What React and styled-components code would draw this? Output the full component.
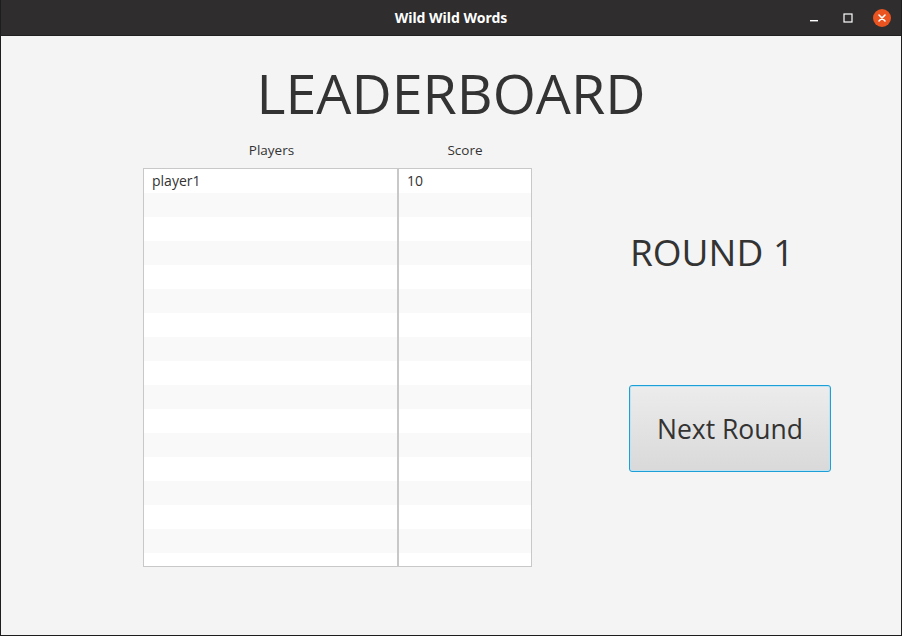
import React from "react";
import styled, { createGlobalStyle } from "styled-components";

const Global = createGlobalStyle`
  html, body { margin: 0; padding: 0; background: #f4f4f4; }
  * { box-sizing: border-box; }
`;

const Window = styled.div`
  width: 902px;
  height: 636px;
  display: flex;
  flex-direction: column;
  background: #f4f4f4;
  border-left: 1px solid #1d1d1d;
  border-right: 1px solid #1d1d1d;
  border-bottom: 1px solid #1d1d1d;
  overflow: hidden;
`;

const TitleBar = styled.div`
  height: 36px;
  flex: none;
  background: #2f2d2d;
  display: flex;
  align-items: center;
  justify-content: center;
  position: relative;
  color: #ffffff;
  font-family: "Noto Sans", "DejaVu Sans", sans-serif;
  font-weight: 700;
  font-size: 14px;
  border-bottom: 1px solid #202020;
`;

const Controls = styled.div`
  position: absolute;
  right: 10px;
  top: 0;
  height: 36px;
  display: flex;
  align-items: center;
  gap: 16px;
`;

const CtrlBtn = styled.div`
  width: 18px;
  height: 18px;
  display: flex;
  align-items: center;
  justify-content: center;
  border-radius: 50%;
  background: ${(p) => (p.$close ? "#e95420" : "transparent")};
`;

const Content = styled.div`
  flex: 1;
  display: flex;
  flex-direction: column;
  align-items: center;
  font-family: "Open Sans", "Noto Sans", sans-serif;
  color: #333333;
`;

const Heading = styled.h1`
  margin: 29px 0 0 0;
  font-weight: 400;
  font-size: 55.5px;
  line-height: 56px;
  letter-spacing: 0;
`;

const Main = styled.div`
  display: flex;
  align-self: stretch;
  padding-left: 142px;
  margin-top: 19px;
`;

const TableArea = styled.div`
  display: flex;
  flex-direction: column;
`;

const HeaderRow = styled.div`
  display: grid;
  grid-template-columns: 255px 132px;
  padding: 0 1px;
  height: 20px;
  align-items: center;
  font-size: 13.5px;
`;

const HeaderCell = styled.div`
  text-align: center;
`;

const Table = styled.div`
  margin-top: 8px;
  width: 389px;
  height: 399px;
  border: 1px solid #c8c8c8;
  background: #ffffff;
  overflow: hidden;
`;

const Row = styled.div`
  display: grid;
  grid-template-columns: 255px 132px;
  height: 24px;
  background: ${(p) => (p.$odd ? "#f9f9f9" : "#ffffff")};
`;

const Cell = styled.div`
  font-size: 14px;
  padding-left: 8px;
  line-height: 24px;
  ${(p) => (p.$first ? "border-right: 2px solid #c8c8c8;" : "")}
`;

const Side = styled.div`
  display: flex;
  flex-direction: column;
  align-items: flex-start;
  margin-left: 97px;
`;

const Round = styled.div`
  margin-top: 92px;
  margin-left: 1px;
  font-size: 37px;
  line-height: 40px;
`;

const NextButton = styled.button`
  margin-top: 113px;
  width: 202px;
  height: 87px;
  border: 1px solid #1c9fd6;
  border-radius: 3px;
  box-shadow: inset 0 0 0 1px #bfe3f2;
  background: linear-gradient(#ececec, #d9d9d9);
  font-family: "Open Sans", "Noto Sans", sans-serif;
  font-size: 26.5px;
  color: #333333;
  padding: 0;
  cursor: pointer;
`;

const players = [{ name: "player1", score: 10 }];

export default function App() {
  const rows = Array.from({ length: 17 }, (_, i) => players[i] || null);
  return (
    <>
      <Global />
      <Window>
        <TitleBar>
          Wild Wild Words
          <Controls>
            <CtrlBtn>
              <svg width="12" height="12" viewBox="0 0 12 12">
                <rect x="2" y="8" width="8" height="1.4" fill="#fff" />
              </svg>
            </CtrlBtn>
            <CtrlBtn>
              <svg width="12" height="12" viewBox="0 0 12 12">
                <rect x="2" y="2" width="8" height="8" fill="none" stroke="#fff" strokeWidth="1.2" />
              </svg>
            </CtrlBtn>
            <CtrlBtn $close>
              <svg width="10" height="10" viewBox="0 0 10 10">
                <path d="M2 2 L8 8 M8 2 L2 8" stroke="#fff" strokeWidth="1.6" strokeLinecap="round" />
              </svg>
            </CtrlBtn>
          </Controls>
        </TitleBar>
        <Content>
          <Heading>LEADERBOARD</Heading>
          <Main>
            <TableArea>
              <HeaderRow>
                <HeaderCell>Players</HeaderCell>
                <HeaderCell>Score</HeaderCell>
              </HeaderRow>
              <Table>
                {rows.map((r, i) => (
                  <Row key={i} $odd={i % 2 === 1}>
                    <Cell $first>{r ? r.name : ""}</Cell>
                    <Cell>{r ? r.score : ""}</Cell>
                  </Row>
                ))}
              </Table>
            </TableArea>
            <Side>
              <Round>ROUND 1</Round>
              <NextButton>Next Round</NextButton>
            </Side>
          </Main>
        </Content>
      </Window>
    </>
  );
}
